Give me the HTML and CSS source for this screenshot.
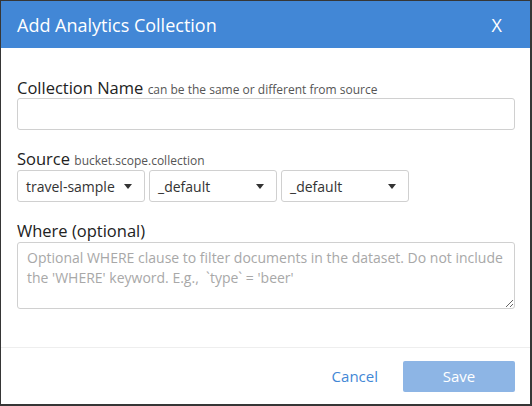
FILE: index.html
```html
<!DOCTYPE html>
<html lang="en">
<head>
<meta charset="utf-8">
<title>Add Analytics Collection</title>
<link rel="stylesheet" href="styles.css">
</head>
<body>
<div class="dialog">
  <header class="dialog-header">
    <h1 class="dialog-title">Add Analytics Collection</h1>
    <span class="dialog-close">X</span>
  </header>
  <div class="dialog-body">
    <div class="field">
      <label class="field-label">Collection Name <small class="hint">can be the same or different from source</small></label>
      <input class="text-input" type="text">
    </div>
    <div class="field">
      <label class="field-label">Source <small class="hint">bucket.scope.collection</small></label>
      <div class="select-row">
        <div class="select"><span>travel-sample</span><i class="caret"></i></div>
        <div class="select"><span>_default</span><i class="caret"></i></div>
        <div class="select"><span>_default</span><i class="caret"></i></div>
      </div>
    </div>
    <div class="field">
      <label class="field-label">Where (optional)</label>
      <textarea class="text-area" placeholder="Optional WHERE clause to filter documents in the dataset. Do not include the 'WHERE' keyword. E.g.,  `type` = 'beer'"></textarea>
    </div>
  </div>
  <footer class="dialog-footer">
    <span class="btn-link">Cancel</span>
    <span class="btn-primary">Save</span>
  </footer>
</div>
</body>
</html>
```
FILE: styles.css
```css
html, body {
  margin: 0;
  padding: 0;
}
body {
  background: #363636;
  width: 532px;
  height: 406px;
  overflow: hidden;
  font-family: "Open Sans", "Liberation Sans", sans-serif;
  color: #333;
}
.dialog {
  margin: 1px 0 0 1px;
  width: 529px;
  height: 403px;
  background: #fff;
  display: flex;
  flex-direction: column;
}
.dialog-header {
  height: 47px;
  flex: none;
  background: #4287d6;
  color: #fff;
  display: flex;
  align-items: center;
  justify-content: space-between;
  padding: 1px 28px 0 16px;
  box-sizing: border-box;
}
.dialog-title {
  margin: 0;
  font-size: 18px;
  font-weight: 500;
  line-height: 24px;
}
.dialog-close {
  font-size: 18px;
  line-height: 24px;
}
.dialog-body {
  flex: 1;
  padding: 29px 15px 0 16px;
}
.field {
  display: flex;
  flex-direction: column;
  margin-bottom: 18px;
}
.field-label {
  font-size: 16.5px;
  font-weight: 500;
  line-height: 21px;
  color: #222;
}
.hint {
  font-size: 12px;
  font-weight: 400;
  line-height: 1;
  color: #555;
}
.text-input {
  box-sizing: border-box;
  height: 32px;
  margin: 0;
  border: 1px solid #d0d0d0;
  border-radius: 3px;
  font: inherit;
}
.select-row {
  display: flex;
  gap: 4px;
  margin-top: 1px;
}
.select {
  box-sizing: border-box;
  width: 128px;
  height: 32px;
  border: 1px solid #d0d0d0;
  border-radius: 3px;
  display: flex;
  align-items: center;
  justify-content: space-between;
  padding: 0 12px 0 8px;
  font-size: 14px;
  color: #333;
}
.caret {
  width: 0;
  height: 0;
  border-left: 4px solid transparent;
  border-right: 4px solid transparent;
  border-top: 5px solid #333;
}
.text-area {
  box-sizing: border-box;
  height: 67px;
  margin: 1px 0 0;
  border: 1px solid #d0d0d0;
  border-radius: 3px;
  padding: 5px 9px;
  font-family: "Open Sans", "Liberation Sans", sans-serif;
  font-size: 14px;
  line-height: 20px;
  color: #333;
  resize: vertical;
}
.text-area::placeholder {
  color: #a8a8a8;
}
.dialog-footer {
  flex: none;
  height: 56px;
  border-top: 1px solid #eeeeee;
  display: flex;
  align-items: center;
  justify-content: flex-end;
  padding: 0 15px 0 16px;
  gap: 25px;
}
.btn-link {
  color: #4287d6;
  font-size: 15px;
}
.btn-primary {
  width: 112px;
  height: 31px;
  border-radius: 2px;
  background: #8db5e5;
  color: #fff;
  font-size: 15px;
  display: flex;
  align-items: center;
  justify-content: center;
}
```
